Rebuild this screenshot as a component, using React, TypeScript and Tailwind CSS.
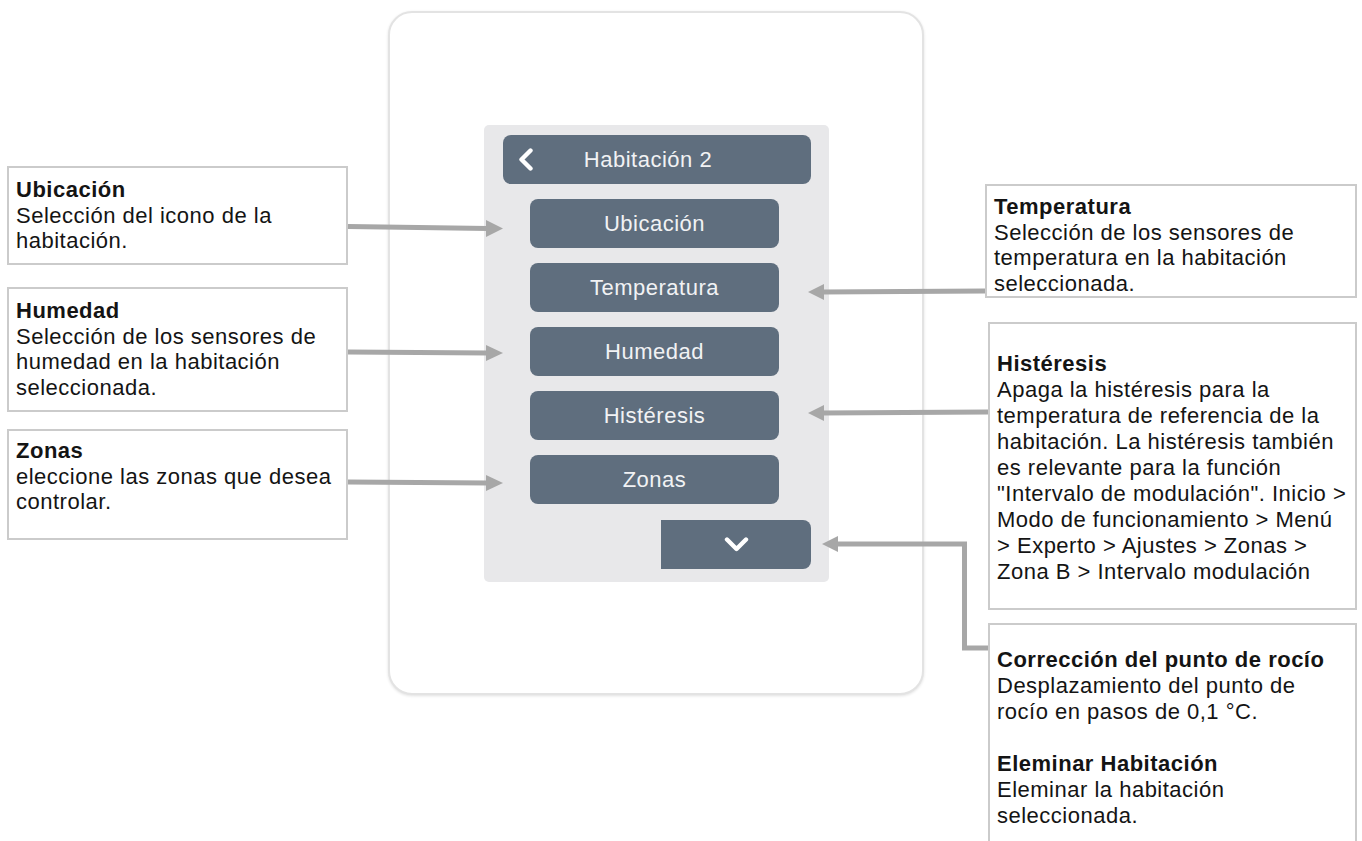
import React from "react";

const boxText =
  "text-[22px] leading-[25.5px] tracking-[0.5px] text-[#141414] whitespace-nowrap";

function Box({
  className,
  lines,
}: {
  className: string;
  lines: { t: string; b?: boolean }[];
}) {
  return (
    <div className={`border-2 border-[#cbcbcb] bg-white pl-[7px] ${boxText} ${className}`}>
      {lines.map((l, i) => (
        <div key={i} className={l.b ? "font-bold" : ""}>
          {l.t === "" ? "\u00a0" : l.t}
        </div>
      ))}
    </div>
  );
}

function MenuButton({ label }: { label: string }) {
  return (
    <div className="ml-[27px] mt-[15px] flex h-[49px] w-[249px] items-center justify-center rounded-[8px] bg-[#5f6e7e] text-[22px] tracking-[0.5px] text-[#f1f2f4]">
      {label}
    </div>
  );
}

function Arrows() {
  const c = "#a7a7a7";
  return (
    <svg
      className="pointer-events-none absolute left-0 top-0"
      width={1362}
      height={841}
      viewBox="0 0 1362 841"
    >
      <line x1={348} y1={226.5} x2={488} y2={228.5} stroke={c} strokeWidth={5} />
      <polygon points="486,220 503,228.5 486,237" fill={c} />
      <line x1={348} y1={352} x2={488} y2={353} stroke={c} strokeWidth={5} />
      <polygon points="486,345 503,353 486,361" fill={c} />
      <line x1={348} y1={482} x2={488} y2={483} stroke={c} strokeWidth={5} />
      <polygon points="486,475 503,483 486,491" fill={c} />
      <line x1={985} y1={291} x2={822} y2={292} stroke={c} strokeWidth={5} />
      <polygon points="824,284 808,292 824,300" fill={c} />
      <line x1={988} y1={412} x2={822} y2={413} stroke={c} strokeWidth={5} />
      <polygon points="824,405 808,413 824,421" fill={c} />
      <polyline
        points="988,648 964.5,648 964.5,544 836,544"
        fill="none"
        stroke={c}
        strokeWidth={5}
      />
      <polygon points="838,536 822,544 838,552" fill={c} />
    </svg>
  );
}

export default function App() {
  return (
    <div className="relative h-[841px] w-[1362px] overflow-hidden bg-white font-['Liberation_Sans',Arial,sans-serif]">
      <div className="flex items-start">
        <div className="ml-[7px] flex w-[341px] flex-col">
          <Box
            className="mt-[166px] h-[99px] pt-[9px]"
            lines={[
              { t: "Ubicación", b: true },
              { t: "Selección del icono de la" },
              { t: "habitación." },
            ]}
          />
          <Box
            className="mt-[22px] h-[125px] pt-[9px]"
            lines={[
              { t: "Humedad", b: true },
              { t: "Selección de los sensores de" },
              { t: "humedad en la habitación" },
              { t: "seleccionada." },
            ]}
          />
          <Box
            className="mt-[17px] h-[111px] pt-[7px]"
            lines={[
              { t: "Zonas", b: true },
              { t: "eleccione las zonas que desea" },
              { t: "controlar." },
            ]}
          />
        </div>

        <div className="ml-[40px] mt-[11px] h-[684px] w-[536px] rounded-[24px] border-2 border-[#e3e3e3] bg-white shadow-[0_1px_3px_rgba(0,0,0,0.12)]">
          <div className="ml-[94px] mt-[112px] flex h-[457px] w-[345px] flex-col rounded-[5px] bg-[#e8e8ea] pl-[19px] pt-[10px]">
            <div className="relative flex h-[49px] w-[308px] items-center justify-center rounded-[8px] bg-[#5f6e7e] text-[22px] tracking-[0.5px] text-[#f1f2f4]">
              <svg
                className="absolute left-[15px] top-[13px]"
                width={16}
                height={23}
                viewBox="0 0 16 23"
              >
                <polyline
                  points="12.5,2.5 3.5,11.5 12.5,20.5"
                  fill="none"
                  stroke="#ffffff"
                  strokeWidth={4.4}
                  strokeLinecap="round"
                  strokeLinejoin="round"
                />
              </svg>
              <span className="-ml-[18px]">Habitación 2</span>
            </div>
            <MenuButton label="Ubicación" />
            <MenuButton label="Temperatura" />
            <MenuButton label="Humedad" />
            <MenuButton label="Histéresis" />
            <MenuButton label="Zonas" />
            <div className="ml-[158px] mt-[16px] flex h-[49px] w-[150px] items-center justify-center rounded-r-[8px] bg-[#5f6e7e]">
              <svg width={25} height={17} viewBox="0 0 25 17">
                <polyline
                  points="3,3.5 12.5,13 22,3.5"
                  fill="none"
                  stroke="#ffffff"
                  strokeWidth={4.4}
                  strokeLinecap="round"
                  strokeLinejoin="round"
                />
              </svg>
            </div>
          </div>
        </div>

        <div className="flex flex-col">
          <Box
            className="ml-[61px] mt-[184px] h-[114px] w-[372px] pt-[8px]"
            lines={[
              { t: "Temperatura", b: true },
              { t: "Selección de los sensores de" },
              { t: "temperatura en la habitación" },
              { t: "seleccionada." },
            ]}
          />
          <div className="ml-[64px] mt-[24px] h-[288px] w-[369px] whitespace-nowrap border-2 border-[#cbcbcb] bg-white pl-[7px] pt-[27px] text-[22px] leading-[26px] tracking-[0.5px] text-[#141414]">
            <div className="font-bold">Histéresis</div>
            <div>Apaga la histéresis para la</div>
            <div>temperatura de referencia de la</div>
            <div>habitación. La histéresis también</div>
            <div>es relevante para la función</div>
            <div>"Intervalo de modulación". Inicio &gt;</div>
            <div>Modo de funcionamiento &gt; Menú</div>
            <div>&gt; Experto &gt; Ajustes &gt; Zonas &gt;</div>
            <div>Zona B &gt; Intervalo modulación</div>
          </div>
          <div className="ml-[64px] mt-[13px] h-[260px] w-[369px] whitespace-nowrap border-2 border-[#cbcbcb] bg-white pl-[7px] pt-[22px] text-[22px] leading-[26px] tracking-[0.5px] text-[#141414]">
            <div className="font-bold">Corrección del punto de rocío</div>
            <div>Desplazamiento del punto de</div>
            <div>rocío en pasos de 0,1 °C.</div>
            <div>&nbsp;</div>
            <div className="font-bold">Eleminar Habitación</div>
            <div>Eleminar la habitación</div>
            <div>seleccionada.</div>
          </div>
        </div>
      </div>
      <Arrows />
    </div>
  );
}
